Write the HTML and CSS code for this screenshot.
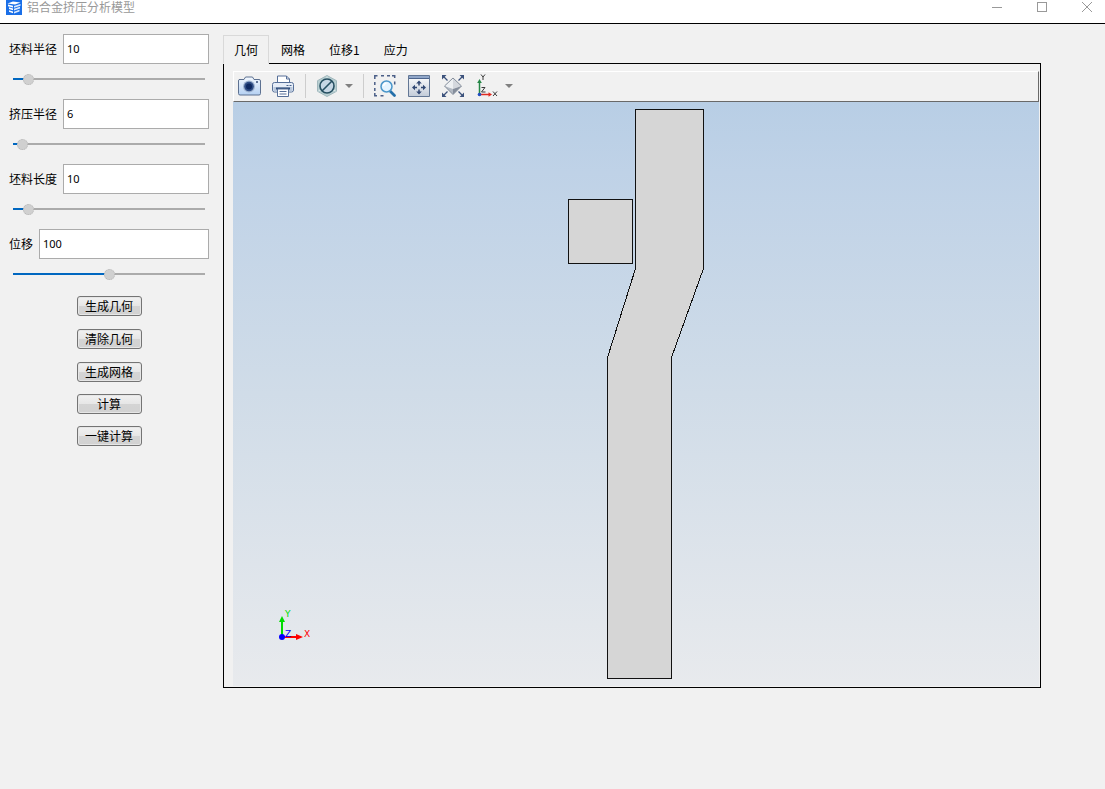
FILE: index.html
```html
<!DOCTYPE html>
<html lang="zh-CN">
<head>
<meta charset="utf-8">
<title>铝合金挤压分析模型</title>
<link rel="stylesheet" href="styles.css">
</head>
<body>
<header class="titlebar">
  <svg class="app-icon" width="16" height="15" viewBox="0 1 16 15" aria-hidden="true">
    <rect width="16" height="16" fill="#1a6fe8"/>
    <path d="M1.500 4.500L7 2.500l7.500 1L9 5.500z" fill="#fff"/>
    <path d="M2 5.500l5 1.300v1.700L2 7.200zM3 8.300l4 1.200v1.700l-4-1.200zM3 11.200l4 1.300v1.700l-4-1.500z" fill="#fff"/>
    <path d="M8 7l6.500-2v1.700L8 8.800zM8 9.800l6-2v1.700l-6 2zM8 12.700l5.500-2v1.700L8 14.500z" fill="#dcebff"/>
  </svg>
  <h1 class="title">铝合金挤压分析模型</h1>
  <div class="window-controls">
    <button class="window-button" type="button" aria-label="最小化"><svg width="12" height="12" viewBox="0 0 12 12"><path d="M1 6.500h10" /></svg></button>
    <button class="window-button" type="button" aria-label="最大化"><svg width="12" height="12" viewBox="0 0 12 12"><rect x="1.500" y="1.500" width="9" height="9"/></svg></button>
    <button class="window-button" type="button" aria-label="关闭"><svg width="12" height="12" viewBox="0 0 12 12"><path d="M1 1l10 10M11 1L1 11"/></svg></button>
  </div>
</header>
<main class="workspace">
  <form class="sidebar">
    <div class="field">
      <div class="field-row"><label for="billet-radius">坯料半径</label><input class="text-input" id="billet-radius" type="text" value="10"></div>
      <input class="slider" type="range" min="0" max="200" value="11" aria-label="坯料半径" style="--fill:8%">
    </div>
    <div class="field">
      <div class="field-row"><label for="extrude-radius">挤压半径</label><input class="text-input" id="extrude-radius" type="text" value="6"></div>
      <input class="slider" type="range" min="0" max="200" value="4" aria-label="挤压半径" style="--fill:5%">
    </div>
    <div class="field">
      <div class="field-row"><label for="billet-length">坯料长度</label><input class="text-input" id="billet-length" type="text" value="10"></div>
      <input class="slider" type="range" min="0" max="200" value="11" aria-label="坯料长度" style="--fill:8%">
    </div>
    <div class="field">
      <div class="field-row"><label for="displacement">位移</label><input class="text-input" id="displacement" type="text" value="100"></div>
      <input class="slider" type="range" min="0" max="200" value="100" aria-label="位移" style="--fill:50%">
    </div>
    <div class="actions">
      <div class="action-group">
        <button class="action" type="button">生成几何</button>
        <button class="action" type="button">清除几何</button>
        <button class="action" type="button">生成网格</button>
      </div>
      <button class="action" type="button">计算</button>
      <button class="action" type="button">一键计算</button>
    </div>
  </form>
  <section class="viewer">
    <div class="tabs" role="tablist">
      <button class="tab tab-active" type="button" role="tab" aria-selected="true">几何</button>
      <button class="tab" type="button" role="tab" aria-selected="false">网格</button>
      <button class="tab" type="button" role="tab" aria-selected="false">位移1</button>
      <button class="tab" type="button" role="tab" aria-selected="false">应力</button>
    </div>
    <div class="panel">
      <div class="toolbar">
        <button class="tool" type="button" aria-label="截图">
          <svg width="24" height="24" viewBox="0 0 24 24">
            <defs><linearGradient id="cam" x2="0" y2="1"><stop offset="0" stop-color="#f4f9ff"/><stop offset="1" stop-color="#b4d0f2"/></linearGradient></defs>
            <path d="M2 5.500h5l1.500-2.500h7l1.500 2.500h5q1.500 0 1.500 1.500v12.500q0 1.500-1.500 1.500H3q-1.500 0-1.500-1.500V7q0-1.500 1-1.500z" fill="url(#cam)" stroke="#5d7191"/>
            <circle cx="12" cy="12.500" r="6" fill="#9fb3d0"/><circle cx="12" cy="12.500" r="4.800" fill="#2f4d85"/><circle cx="12" cy="12.500" r="3" fill="#0d2860"/><circle cx="20" cy="8" r="1" fill="#344c78"/>
          </svg>
        </button>
        <button class="tool" type="button" aria-label="打印">
          <svg width="24" height="24" viewBox="0 0 24 24">
            <path d="M6.500 9V2h9l3 3v4z" fill="#fff" stroke="#566f98"/><path d="M15.500 2v3h3" fill="none" stroke="#566f98"/>
            <rect x="1.500" y="8.500" width="21" height="9.500" rx="2" fill="#e6edf7" stroke="#566f98"/>
            <path d="M2.500 13h19v3q0 1.500-1.500 1.500H4q-1.500 0-1.500-1.500z" fill="#b9c8dc"/>
            <path d="M15.500 11.500h2m1 0h2" stroke="#455f88"/>
            <path d="M5 14.500h14" stroke="#2f4c79" stroke-width="2"/><path d="M6.500 15h11v7.500h-11z" fill="#fff" stroke="#566f98"/><path d="M8.500 17.500h7m-7 2.500h7" stroke="#566f98"/>
          </svg>
        </button>
        <span class="separator"></span>
        <button class="tool tool-menu" type="button" aria-label="显示选项">
          <svg width="24" height="24" viewBox="0 0 24 24">
            <path d="M11 1.500l9.500 5.200v10.600L11 22.500l-9.500-5.200V6.700z" fill="#b8cfd2" stroke="#a1b8bd"/>
            <path d="M11 2.500v4M2.500 17l4-2M19.500 17l-4-2" stroke="#dce9ea"/>
            <circle cx="11" cy="12" r="7" fill="#c5d6e4" stroke="#264f61" stroke-width="1.600"/><path d="M6 17L16 7" stroke="#264f61" stroke-width="1.600"/>
          </svg>
          <span class="caret"></span>
        </button>
        <span class="separator"></span>
        <button class="tool" type="button" aria-label="框选缩放">
          <svg width="24" height="24" viewBox="0 0 24 24">
            <path d="M.8 5V1.800H3.500M7 1.800h3M13 1.800h3M18 1.800h2.700V4M20.700 7.500v3M.8 8v3M.8 14v3M.8 19v2.700H3M6.500 21.700h3" fill="none" stroke="#4b5f87" stroke-width="1.500"/>
            <path d="M16 17l4.500 4.500" stroke="#246fa9" stroke-width="2.800" stroke-linecap="round"/>
            <circle cx="12.500" cy="12.500" r="5.500" fill="#e4f4ff" stroke="#4a96ca" stroke-width="1.500"/><path d="M9.500 12q.5-2.500 3-2.700" stroke="#fff" stroke-width="1.500" fill="none"/>
          </svg>
        </button>
        <button class="tool" type="button" aria-label="适合窗口">
          <svg width="24" height="24" viewBox="0 0 24 24">
            <defs><linearGradient id="fit" x2="0" y2="1"><stop offset="0" stop-color="#fff"/><stop offset="1" stop-color="#c2cbd8"/></linearGradient></defs>
            <path d="M.5 1.500h21v21H.5z" fill="url(#fit)" stroke="#637795"/><path d="M1 2h20v2.500H1z" fill="#91a7c9"/><path d="M1 4.500h20" stroke="#4d658d"/>
            <path d="M11 6.500l2.800 3H8.200zM11 20.500l2.800-3H8.200zM4 13.500l3-2.800v5.600zM18 13.500l-3-2.800v5.600z" fill="#304773"/><path d="M11 8.500v3m0 4v3M6 13.500h3m4 0h3" stroke="#304773" stroke-width="1.500"/>
          </svg>
        </button>
        <button class="tool" type="button" aria-label="缩放到全部">
          <svg width="24" height="24" viewBox="0 0 24 24">
            <path d="M11 4l8.500 8-8.500 3z" fill="#d4d8de"/><path d="M11 4l-8.500 8 8.500 3z" fill="#edf0f3"/><path d="M2.500 12l8.500 8.500V15z" fill="#b3bac4"/><path d="M19.500 12L11 20.500V15z" fill="#858e9c"/><path d="M11 4l8.500 8-8.500 8.500L2.500 12z" fill="none" stroke="#858e9b"/>
            <path d="M0 1h4.500L0 5.500zM22 1h-4.500L22 5.500zM0 23h4.500L0 18.500zM22 23h-4.500l4.500-4.500z" fill="#3c527c"/><path d="M2 3l3.500 3.500M20 3l-3.500 3.500M2 21l3.500-3.500M20 21l-3.500-3.500" stroke="#3c527c" stroke-width="1.300"/>
          </svg>
        </button>
        <button class="tool tool-menu" type="button" aria-label="视图方向">
          <svg width="24" height="24" viewBox="0 0 24 24">
            <path d="M3.500 20V8" stroke="#248645" stroke-width="1.500"/><path d="M3.500 5L5.800 9H1.200z" fill="#248645"/>
            <path d="M4 20.500h9" stroke="#e02c23" stroke-width="1.500"/><path d="M16 20.500L12.500 18.300v4.400z" fill="#e02c23"/><circle cx="3.500" cy="20.500" r="1.800" fill="#214ec0"/>
            <g fill="none" stroke="#3b3b3b"><path d="M5 .5l2 2.500L9 .5M7 3v3M5.500 13.500h3.500l-3.500 4.500h4M17 17.500l4 4.500M21 17.500l-4 4.500"/></g>
          </svg>
          <span class="caret"></span>
        </button>
      </div>
      <div class="canvas">
        <svg class="scene" viewBox="0 0 806 584" role="img" aria-label="几何模型">
          <g class="body-shape">
            <path d="M335.500 97.500h64v64h-64z"/>
            <path d="M402.500 7.500h68v159l-32 89v321h-64v-321l28-89z"/>
          </g>
          <g class="triad">
            <path d="M49 534v-16" stroke="#00dc00" stroke-width="2"/><path d="M49 514l3 6h-6z" fill="#00dc00"/>
            <path d="M50 535h15" stroke="#f00" stroke-width="2"/><path d="M70 535l-7-3v6z" fill="#f00"/>
            <circle cx="49" cy="535" r="3" fill="#00f"/>
            <text x="52" y="515" fill="#00dc00">Y</text><text x="52" y="535" fill="#00f">Z</text><text x="71" y="535" fill="#f00">X</text>
          </g>
        </svg>
      </div>
    </div>
  </section>
</main>
</body>
</html>
```
FILE: styles.css
```css
* { box-sizing: border-box; }

body {
  margin: 0;
  min-height: 100vh;
  display: flex;
  flex-direction: column;
  background: #f1f1f1;
  color: #000;
  font: 12px/16px "Noto Sans CJK SC", sans-serif;
}

button, input { font: inherit; color: inherit; margin: 0; }
svg { display: block; }

.titlebar {
  display: flex;
  align-items: flex-start;
  height: 24px;
  padding-left: 6px;
  gap: 5px;
  background: #fff;
  border-bottom: 1px solid #000;
}
.app-icon { flex: none; }
.title { margin: 0; font-size: 12px; line-height: 14px; font-weight: 400; color: #999; }
.window-controls { display: flex; margin-left: auto; }
.window-button {
  width: 45px;
  height: 14px;
  padding: 0;
  display: flex;
  justify-content: center;
  align-items: center;
  border: 0;
  background: none;
}
.window-button:last-child { width: 46px; padding-right: 0; margin-right: -5px; }
.window-controls { overflow: hidden; }
.window-button svg { fill: none; stroke: #999; }

.workspace {
  flex: 1;
  display: flex;
  gap: 14px;
  padding: 10px 64px 102px 9px;
}

.sidebar { width: 200px; flex: none; display: flex; flex-direction: column; gap: 12px; }
.field-row { display: flex; align-items: center; gap: 6px; }
.field-row label { flex: none; }
.text-input {
  flex: 1;
  min-width: 0;
  height: 30px;
  padding: 0 3px 2px;
  border: 1px solid #ababab;
  border-radius: 0;
  background: #fff;
  font: 11px/16px "Noto Sans", "Noto Sans CJK SC", sans-serif;
}

.slider {
  appearance: none;
  display: block;
  width: calc(100% - 8px);
  height: 16px;
  margin: 7px 4px 0;
  background: linear-gradient(to right, #0067c0 var(--fill), #ababab var(--fill)) center / 100% 2px no-repeat;
}
.slider::-webkit-slider-thumb {
  appearance: none;
  width: 11px;
  height: 11px;
  border: 1px dotted #b5b5b5;
  border-radius: 50%;
  background: #d0d0d0;
}

.actions { display: grid; justify-content: center; gap: 12px; margin-top: 2px; }
.action-group { display: grid; gap: 13px; }
.action {
  width: 65px;
  height: 20px;
  padding: 0;
  border: 1px solid #747474;
  border-radius: 3px;
  background: linear-gradient(#f1f1f1, #e6e6e6 50%, #d4d4d4 50%, #d2d2d2);
  box-shadow: inset 0 0 0 1px #e6e6e6;
}

.viewer { flex: 1; min-width: 0; display: flex; flex-direction: column; padding-top: 1px; }
.tabs { display: flex; position: relative; margin-bottom: -1px; }
.tab {
  height: 29px;
  padding: 0 11px;
  border: 1px solid transparent;
  background: none;
}
.tab-active { padding: 0 10px; background: #f1f1f1; border-color: #d9d9d9; border-bottom-color: #f1f1f1; }

.panel {
  flex: 1;
  display: flex;
  flex-direction: column;
  padding: 7px 1px 1px 9px;
  border: 1px solid #000;
}
.toolbar {
  display: flex;
  align-items: center;
  gap: 10px;
  height: 31px;
  padding: 0 0 2px 3px;
  border: 1px solid #fff;
  border-right-color: #696969;
  border-bottom-color: #696969;
}
.tool { padding: 0; border: 0; background: none; }
.tool-menu { display: flex; align-items: center; gap: 5px; }
.caret { border: 4px solid transparent; border-top-color: #808080; border-bottom: 0; }
.separator { width: 1px; height: 24px; background: #cdcdcd; }

.canvas { flex: 1; display: flex; background: linear-gradient(#b8cee5, #bfd2e7 12%, #d0dce8 50%, #e8eaed); }
.scene { flex: 1; min-width: 0; width: 100%; height: 100%; }
.body-shape { fill: #d6d6d6; stroke: #111; shape-rendering: crispEdges; }
.triad text { font: 9px "DejaVu Sans", sans-serif; }
```
